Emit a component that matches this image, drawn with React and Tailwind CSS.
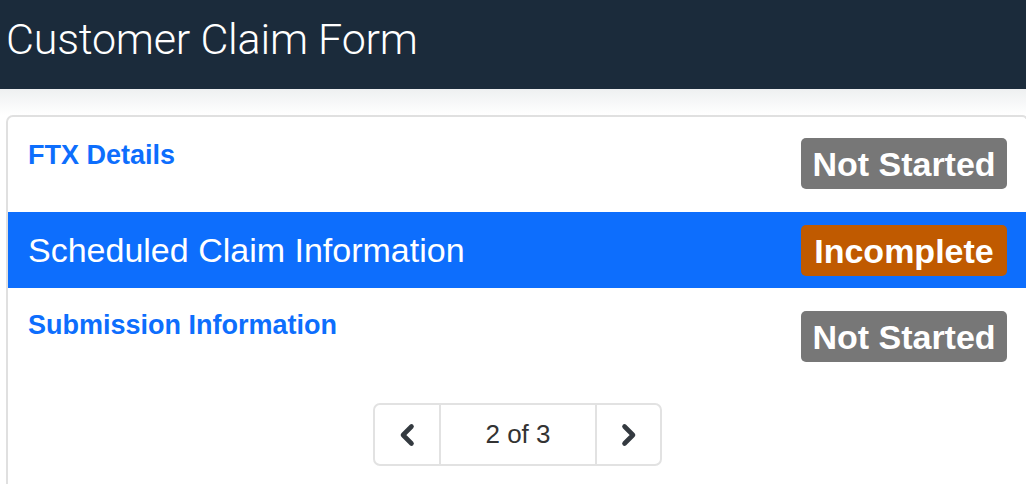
import React from "react";

const Chevron = ({ dir }) => (
  <svg width="18" height="24" viewBox="0 0 18 24" fill="none">
    <path
      d={dir === "left" ? "M13.5 3.5 L5 12 L13.5 20.5" : "M4.5 3.5 L13 12 L4.5 20.5"}
      stroke="#343a40"
      strokeWidth="4.6"
      strokeLinecap="round"
      strokeLinejoin="round"
    />
  </svg>
);

const Badge = ({ children, color }) => (
  <span
    className={`inline-block w-[206px] rounded-[5px] pt-[9px] pb-[8px] text-center text-[34px] font-bold leading-[34px] text-white ${color}`}
  >
    {children}
  </span>
);

export default function App() {
  return (
    <div className="w-[1026px] h-[484px] overflow-hidden bg-white font-['Liberation_Sans',Arial,sans-serif]">
      <div className="h-[89px] bg-[#1b2b3b] pl-[6px] pt-[18px]">
        <h1 className="text-[43px] leading-[43px] font-light text-white font-['Roboto','Liberation_Sans',sans-serif] tracking-[-0.2px]">
          Customer Claim Form
        </h1>
      </div>
      <div className="h-[26px] bg-linear-to-b from-[#eef0f1] to-white" />
      <div className="ml-[6px] w-[1023px] rounded-tl-[7px] rounded-tr-[7px] border-2 border-b-0 border-[#e0e0e0] bg-white pb-[60px]">
        <div className="flex h-[95px] items-start justify-between px-5 pt-[21px]">
          <a className="mt-[1px] text-[27px] leading-[32px] font-bold text-[#0d6efd]">FTX Details</a>
          <Badge color="bg-[#777777]">Not Started</Badge>
        </div>
        <div className="flex h-[76px] items-center justify-between bg-[#0d6efd] px-5">
          <span className="text-[34px] leading-[40px] text-white">Scheduled Claim Information</span>
          <Badge color="bg-[#c05a00]">Incomplete</Badge>
        </div>
        <div className="flex h-[95px] items-start justify-between px-5 pt-[23px]">
          <a className="-mt-[2px] text-[27px] leading-[32px] font-bold text-[#0d6efd]">Submission Information</a>
          <Badge color="bg-[#777777]">Not Started</Badge>
        </div>
        <div className="flex justify-center pt-[20px]">
          <div className="flex h-[63px] overflow-hidden rounded-[7px] border-2 border-[#e2e2e2]">
            <button className="flex w-[66px] items-center justify-center border-r-2 border-[#e2e2e2]">
              <Chevron dir="left" />
            </button>
            <div className="flex w-[154px] items-center justify-center text-[26px] text-[#333333]">2 of 3</div>
            <button className="flex w-[65px] items-center justify-center border-l-2 border-[#e2e2e2]">
              <Chevron dir="right" />
            </button>
          </div>
        </div>
      </div>
    </div>
  );
}
